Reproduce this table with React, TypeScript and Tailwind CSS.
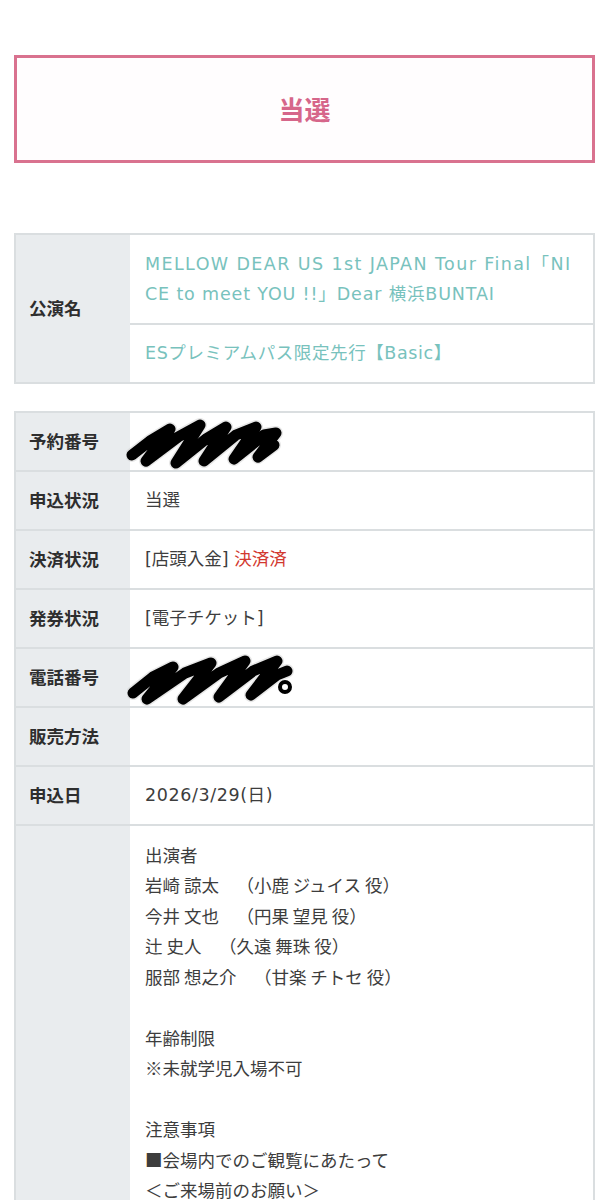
import React from "react";

const ROOT_FONT = { fontFamily: '"Noto Sans CJK JP", sans-serif' };
const VAL_FONT = { fontFamily: '"DejaVu Sans", "Noto Sans CJK JP", sans-serif' };

function Scribble1() {
  const pts = "6,38 24,24 44,12 20,44 52,20 74,8 50,46 80,22 100,10 78,44 110,18 130,10 108,42 138,18 150,16 132,40 148,28";
  return (
    <svg className="absolute left-[-4px] top-[4px]" width="160" height="56" viewBox="0 0 160 56">
      <polyline points={pts} fill="none" stroke="#cfcfcf" strokeWidth="14" strokeLinecap="round" strokeLinejoin="round" opacity="0.5" />
      <polyline points={pts} fill="none" stroke="#000" strokeWidth="11" strokeLinecap="round" strokeLinejoin="round" />
    </svg>
  );
}

function Scribble2() {
  const pts = "6,40 26,24 46,14 20,46 58,20 84,10 56,46 92,20 118,8 92,44 126,18 150,8 124,42 150,22 160,18";
  return (
    <svg className="absolute left-[-3px] top-[4px]" width="172" height="54" viewBox="0 0 172 54">
      <polyline points={pts} fill="none" stroke="#cfcfcf" strokeWidth="14" strokeLinecap="round" strokeLinejoin="round" opacity="0.5" />
      <polyline points={pts} fill="none" stroke="#000" strokeWidth="11" strokeLinecap="round" strokeLinejoin="round" />
      <circle cx="158" cy="34" r="5" fill="none" stroke="#000" strokeWidth="4" />
    </svg>
  );
}

type Row = { label: string; value?: React.ReactNode; scribble?: React.ReactNode };

export default function App() {
  const rows: Row[] = [
    { label: "予約番号", scribble: <Scribble1 /> },
    { label: "申込状況", value: "当選" },
    {
      label: "決済状況",
      value: (
        <>
          [店頭入金] <span className="text-[#d2382f]">決済済</span>
        </>
      ),
    },
    { label: "発券状況", value: "[電子チケット]" },
    { label: "電話番号", scribble: <Scribble2 /> },
    { label: "販売方法" },
    { label: "申込日", value: <span className="tracking-[0.6px]">2026/3/29(日)</span> },
  ];

  const notes = [
    "出演者",
    "岩崎 諒太　（小鹿 ジュイス 役）",
    "今井 文也　（円果 望見 役）",
    "辻 史人　（久遠 舞珠 役）",
    "服部 想之介　（甘楽 チトセ 役）",
    "",
    "年齢制限",
    "※未就学児入場不可",
    "",
    "注意事項",
    "■会場内でのご観覧にあたって",
    "＜ご来場前のお願い＞",
    "",
    "",
  ];

  return (
    <div className="min-h-[1200px] bg-white pt-[55px] pb-[40px] [text-spacing-trim:space-all]" style={ROOT_FONT}>
      <div className="mx-[14px] h-[108px] border-[3px] border-[#d9728f] bg-[#fffdfe] flex items-center justify-center">
        <span className="text-[26px] font-bold text-[#d6668a] leading-none">当選</span>
      </div>

      <div className="mx-[14px] mt-[70px] border-2 border-[#dadee0] flex text-[17.5px] leading-[30.5px]">
        <div className="w-[114px] shrink-0 bg-[#e9ecee] flex items-center pl-[13px] font-bold text-[#2e2e2e]">
          公演名
        </div>
        <div className="flex-1 flex flex-col text-[#78c2bd]" style={VAL_FONT}>
          <div className="pl-[15px] pt-[13.5px] pb-[13px] whitespace-nowrap">
            <div className="tracking-[1.4px]">MELLOW DEAR US 1st JAPAN Tour Final「NI</div>
            <div className="tracking-[0.85px]">CE to meet YOU !!」Dear 横浜BUNTAI</div>
          </div>
          <div className="border-t-2 border-[#dadee0] pl-[15px] pt-[13.5px] pb-[13px] whitespace-nowrap tracking-[0.6px]">
            ESプレミアムパス限定先行【Basic】
          </div>
        </div>
      </div>

      <div className="mx-[14px] mt-[27px] border-2 border-b-0 border-[#dadee0] text-[17.5px] leading-[30.5px]">
        {rows.map((r, i) => (
          <div key={r.label} className={`flex ${i > 0 ? "border-t-2 border-[#dadee0]" : ""}`}>
            <div className="w-[114px] shrink-0 bg-[#e9ecee] pl-[13px] pt-[13.5px] pb-[13px] font-bold text-[#2e2e2e]">
              {r.label}
            </div>
            <div
              className="relative flex-1 pl-[15px] pt-[13.5px] pb-[13px] text-[#3d3d3d] whitespace-nowrap"
              style={VAL_FONT}
            >
              {r.value ?? "\u00a0"}
              {r.scribble}
            </div>
          </div>
        ))}
        <div className="flex border-t-2 border-[#dadee0]">
          <div className="w-[114px] shrink-0 bg-[#e9ecee]" />
          <div className="flex-1 pl-[15px] pt-[14px] text-[#3d3d3d] whitespace-pre">
            {notes.map((n, i) => (
              <div key={i}>{n === "" ? "\u00a0" : n}</div>
            ))}
          </div>
        </div>
      </div>
    </div>
  );
}
